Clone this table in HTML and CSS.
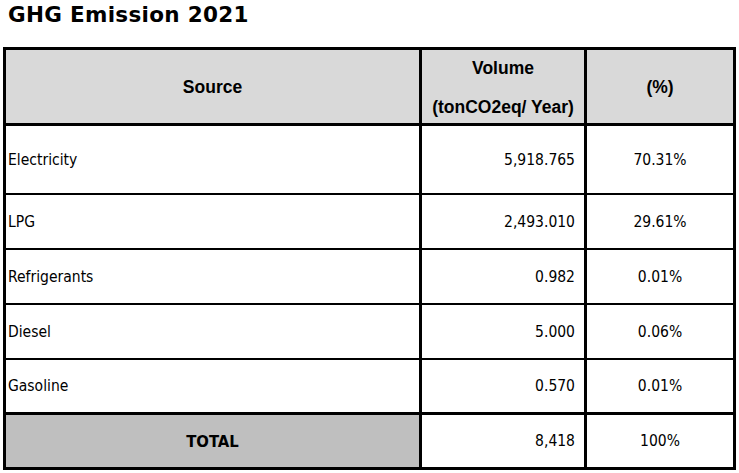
FILE: index.html
```html
<!DOCTYPE html>
<html>
<head>
<meta charset="utf-8">
<link rel="stylesheet" href="styles.css">
</head>
<body>
<div class="page">
  <h1 class="title">GHG Emission 2021</h1>
  <table class="ghg">
    <tr class="head">
      <th class="c1">Source</th>
      <th class="c2"><div class="l1">Volume</div><div class="l2">(tonCO2eq/ Year)</div></th>
      <th class="c3">(%)</th>
    </tr>
    <tr class="r-tall">
      <td class="c1 name">Electricity</td>
      <td class="c2 num">5,918.765</td>
      <td class="c3 pct">70.31%</td>
    </tr>
    <tr class="r">
      <td class="c1 name">LPG</td>
      <td class="c2 num">2,493.010</td>
      <td class="c3 pct">29.61%</td>
    </tr>
    <tr class="r">
      <td class="c1 name">Refrigerants</td>
      <td class="c2 num">0.982</td>
      <td class="c3 pct">0.01%</td>
    </tr>
    <tr class="r">
      <td class="c1 name">Diesel</td>
      <td class="c2 num">5.000</td>
      <td class="c3 pct">0.06%</td>
    </tr>
    <tr class="r last">
      <td class="c1 name">Gasoline</td>
      <td class="c2 num">0.570</td>
      <td class="c3 pct">0.01%</td>
    </tr>
    <tr class="total">
      <td class="c1 total-label">TOTAL</td>
      <td class="c2 num">8,418</td>
      <td class="c3 pct">100%</td>
    </tr>
  </table>
</div>
</body>
</html>
```

FILE: styles.css
```css
html, body {
  margin: 0;
  padding: 0;
  background: #fff;
  color: #000;
}

.page {
  padding: 0 0 0 3px;
}

.title {
  margin: 2px 0 19px 5px;
  font-family: "DejaVu Sans", Verdana, sans-serif;
  font-weight: bold;
  font-size: 21.5px;
  letter-spacing: 0.3px;
  line-height: 26px;
}

.ghg {
  border-collapse: separate;
  border-spacing: 0;
  border: 3px solid #000;
  width: 733px;
  table-layout: fixed;
  font-family: "DejaVu Sans Condensed", "DejaVu Sans", sans-serif;
  font-size: 15.5px;
}

.ghg th,
.ghg td {
  box-sizing: border-box;
  padding: 0;
  vertical-align: middle;
  border-bottom: 2px solid #000;
}

.ghg .c1 { width: 416px; border-right: 3px solid #000; }
.ghg .c2 { width: 165px; border-right: 3px solid #000; }
.ghg .c3 { width: 146px; }

.head { height: 76px; }
.head th {
  background: #d9d9d9;
  border-bottom-width: 3px;
  font-family: "Liberation Sans", Arial, sans-serif;
  font-weight: bold;
  font-size: 17.5px;
  text-align: center;
  line-height: 20px;
}
.head .l2 { margin-top: 19px; }
.head .l1 { margin-top: 1px; }

.r-tall { height: 69px; }
.r { height: 55px; }
.r.last td { border-bottom-width: 3px; }
.total { height: 52px; }
.total td { border-bottom: 0; }

.name {
  text-align: left;
  padding-left: 2px !important;
}
.num {
  text-align: right;
  padding-right: 9px !important;
}
.pct {
  text-align: center;
}

.total-label {
  background: #bfbfbf;
  text-align: center;
  font-weight: bold;
  font-size: 16.5px;
}
```
